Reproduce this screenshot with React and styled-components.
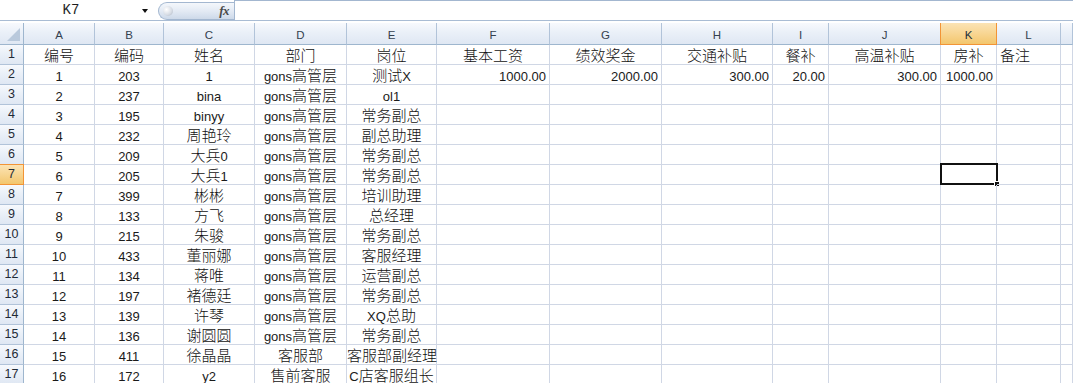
import React from "react";
import styled, { createGlobalStyle, css } from "styled-components";

const GlobalStyle = createGlobalStyle`
  html, body { margin: 0; padding: 0; background: #ffffff; overflow: hidden; }
  body { width: 1073px; height: 383px; font-family: "Noto Sans CJK SC", "Liberation Sans", sans-serif; }
  * { box-sizing: border-box; }
`;

const WIDTHS = [24, 71, 69, 91, 92, 90, 113, 112, 111, 56, 112, 56, 64];
const LETTERS = ["A", "B", "C", "D", "E", "F", "G", "H", "I", "J", "K", "L", ""];
const SEL_COL = 10; // K
const SEL_ROW = 7;

const HEADERS = ["编号", "编码", "姓名", "部门", "岗位", "基本工资", "绩效奖金", "交通补贴", "餐补", "高温补贴", "房补", "备注", ""];

const DATA = [
  ["1", "203", "1", "gons高管层", "测试X", "1000.00", "2000.00", "300.00", "20.00", "300.00", "1000.00"],
  ["2", "237", "bina", "gons高管层", "ol1"],
  ["3", "195", "binyy", "gons高管层", "常务副总"],
  ["4", "232", "周艳玲", "gons高管层", "副总助理"],
  ["5", "209", "大兵0", "gons高管层", "常务副总"],
  ["6", "205", "大兵1", "gons高管层", "常务副总"],
  ["7", "399", "彬彬", "gons高管层", "培训助理"],
  ["8", "133", "方飞", "gons高管层", "总经理"],
  ["9", "215", "朱骏", "gons高管层", "常务副总"],
  ["10", "433", "董丽娜", "gons高管层", "客服经理"],
  ["11", "134", "蒋唯", "gons高管层", "运营副总"],
  ["12", "197", "褚德廷", "gons高管层", "常务副总"],
  ["13", "139", "许琴", "gons高管层", "XQ总助"],
  ["14", "136", "谢圆圆", "gons高管层", "常务副总"],
  ["15", "411", "徐晶晶", "客服部", "客服部副经理"],
  ["16", "172", "y2", "售前客服", "C店客服组长"],
];

/* ---------- formula bar ---------- */
const FormulaBar = styled.div`
  display: flex;
  height: 21px;
  border-bottom: 1px solid #a9bcd4;
  margin-bottom: 2px;
  background: #ffffff;
`;

const NameBox = styled.div`
  position: relative;
  width: 158px;
  display: flex;
  align-items: center;
  padding-right: 18px;
`;

const NameText = styled.span`
  flex: 1;
  text-align: center;
  font-family: "Liberation Mono", monospace;
  font-size: 14px;
  color: #1e1e1e;
`;

const DropArrow = styled.span`
  width: 0;
  height: 0;
  border-left: 3.5px solid transparent;
  border-right: 3.5px solid transparent;
  border-top: 4px solid #111;
  margin-right: -8px;
  margin-top: 1px;
`;

const FxPill = styled.div`
  position: relative;
  width: 76px;
  height: 18px;
  margin-top: 2px;
  border: 1px solid #a3b7d0;
  border-right: none;
  border-radius: 9px 0 0 9px;
  background: linear-gradient(#f4f7fb 0%, #e3eaf4 50%, #cdd9e9 100%);
  display: flex;
  align-items: center;
  justify-content: flex-end;
  padding-right: 5px;
`;

const PillKnob = styled.span`
  position: absolute;
  left: 4px;
  top: 3px;
  width: 10px;
  height: 10px;
  border-radius: 50%;
  background: radial-gradient(circle at 35% 35%, #ffffff 0%, #d9dee6 55%, #a8b2c0 100%);
`;

const FxLabel = styled.span`
  font-family: "Liberation Serif", serif;
  font-style: italic;
  font-weight: bold;
  font-size: 13px;
  color: #4a4a4a;
  letter-spacing: -0.5px;
`;

const FormulaInput = styled.div`
  flex: 1;
  border-top: 1px solid #a3b7d0;
  border-left: 1px solid #a3b7d0;
  background: #ffffff;
`;

/* ---------- sheet ---------- */
const Sheet = styled.div`
  display: grid;
  grid-template-columns: ${WIDTHS.map((w) => w + "px").join(" ")} 1fr;
  grid-auto-rows: 20px;
  grid-template-rows: 22px;
`;

const headerBg = css`
  background: linear-gradient(#f7f9fd 0%, #eaf0f8 45%, #dfe7f3 100%);
`;
const selectedBg = css`
  background: linear-gradient(#fbe3b4 0%, #f8d796 45%, #f3c66d 100%);
`;

const Corner = styled.div`
  position: relative;
  ${headerBg};
  border-right: 1px solid #9eb6ce;
  border-bottom: 1px solid #9eb6ce;
  &::after {
    content: "";
    position: absolute;
    right: 3px;
    bottom: 3px;
    width: 0;
    height: 0;
    border-left: 13px solid transparent;
    border-bottom: 13px solid #b9c9dc;
  }
`;

const ColHeader = styled.div`
  ${(p) => (p.$selected ? selectedBg : headerBg)};
  border-right: 1px solid ${(p) => (p.$selected ? "#f29436" : "#b1c3d9")};
  border-bottom: 1px solid ${(p) => (p.$selected ? "#f29436" : "#9eb6ce")};
  ${(p) => p.$selected && "border-left: 1px solid #f29436; margin-left: -1px;"}
  font-family: "Liberation Sans", sans-serif;
  font-size: 11.5px;
  color: ${(p) => (p.$selected ? "#20303a" : "#34414f")};
  text-align: center;
  line-height: 22px;
  padding-top: 1px;
  white-space: nowrap;
  overflow: hidden;
`;

const RowHeader = styled.div`
  ${(p) => (p.$selected ? selectedBg : headerBg)};
  border-right: 1px solid ${(p) => (p.$selected ? "#f29436" : "#9eb6ce")};
  border-bottom: 1px solid ${(p) => (p.$selected ? "#f29436" : "#b1c3d9")};
  ${(p) => p.$selected && "border-top: 1px solid #f29436; margin-top: -1px;"}
  font-family: "Liberation Sans", sans-serif;
  font-size: 12.5px;
  color: #1f2a36;
  text-align: center;
  line-height: 19px;
`;

const Cell = styled.div`
  position: relative;
  border-right: 1px solid #d0d7e5;
  border-bottom: 1px solid #d0d7e5;
  font-family: "Noto Sans CJK SC", "Liberation Sans", sans-serif;
  font-size: 15px;
  font-weight: 300;
  color: #111;
  line-height: 19px;
  white-space: nowrap;
  text-align: ${(p) => p.$align};
  padding: 0 ${(p) => (p.$align === "right" ? "3px" : "0")} 0 ${(p) => (p.$align === "left" ? "3px" : "0")};
`;

const Latin = styled.span`
  font-family: "Liberation Sans", sans-serif;
  font-weight: 400;
  font-size: 13px;
  color: #1a1a1a;
`;

const Selection = styled.div`
  position: absolute;
  top: -2px;
  left: -1px;
  right: -2px;
  bottom: -1px;
  border: 2px solid #111;
  pointer-events: none;
`;

const FillHandle = styled.div`
  position: absolute;
  right: -4px;
  bottom: -4px;
  width: 6px;
  height: 6px;
  background: #111;
  border: 1px solid #fff;
`;

function Txt({ text }) {
  const parts = text.split(/([\x00-\x7f]+)/).filter(Boolean);
  return parts.map((p, i) =>
    /^[\x00-\x7f]+$/.test(p) ? <Latin key={i}>{p}</Latin> : <React.Fragment key={i}>{p}</React.Fragment>
  );
}

function alignFor(row, col) {
  if (row === 1) return col === 11 ? "left" : "center";
  if (col >= 5 && col <= 10) return "right";
  return "center";
}

export default function App() {
  const rows = [HEADERS, ...DATA];
  return (
    <>
      <GlobalStyle />
      <FormulaBar>
        <NameBox>
          <NameText>K7</NameText>
          <DropArrow />
        </NameBox>
        <FxPill>
          <PillKnob />
          <FxLabel>fx</FxLabel>
        </FxPill>
        <FormulaInput />
      </FormulaBar>
      <Sheet>
        <Corner />
        {LETTERS.map((l, i) => (
          <ColHeader key={i} $selected={i === SEL_COL}>
            {l}
          </ColHeader>
        ))}
        {rows.map((r, ri) => {
          const rowNum = ri + 1;
          return (
            <React.Fragment key={rowNum}>
              <RowHeader $selected={rowNum === SEL_ROW}>{rowNum}</RowHeader>
              {LETTERS.map((l, ci) => {
                const v = r[ci] || "";
                const sel = rowNum === SEL_ROW && ci === SEL_COL;
                return (
                  <Cell key={ci} $align={alignFor(rowNum, ci)}>
                    {v && <Txt text={v} />}
                    {sel && (
                      <Selection>
                        <FillHandle />
                      </Selection>
                    )}
                  </Cell>
                );
              })}
            </React.Fragment>
          );
        })}
      </Sheet>
    </>
  );
}
